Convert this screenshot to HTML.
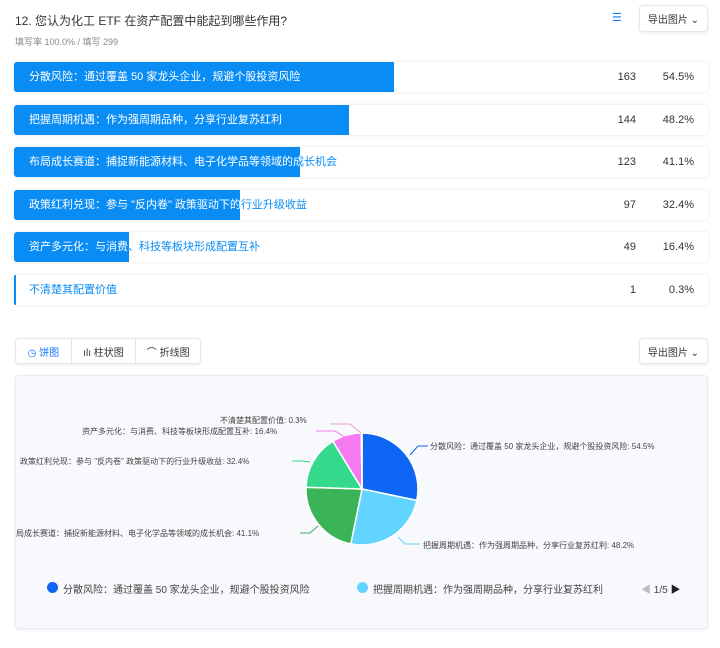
<!DOCTYPE html>
<html><head><meta charset="utf-8"><style>
*{margin:0;padding:0;box-sizing:border-box}
body{width:720px;height:648px;background:#fff;font-family:"Liberation Sans","Noto Sans CJK SC",sans-serif;position:relative;overflow:hidden;color:#333}
.abs{position:absolute}
.title{left:15px;top:12px;font-size:12px;color:#333}
.sub{left:15px;top:35px;font-size:9px;color:#888}
.btn{border:1px solid #e4e7ed;border-radius:4px;background:#fff;font-size:10px;color:#333;box-shadow:0 1px 3px rgba(0,0,0,.08);display:flex;align-items:center;justify-content:center}
.row{position:absolute;left:14px;width:694px;height:30px;border-radius:3px;background:#fff;box-shadow:0 0 3px rgba(0,0,0,.12);font-size:11px;line-height:30px}
.row .t{position:absolute;left:15px;top:0;color:#0a8cf5;white-space:nowrap}
.row .bar{position:absolute;left:0;top:0;height:30px;background:#0a8cf5;overflow:hidden;border-radius:3px 0 0 3px}
.row .bar .t{color:#fff}
.row .n{position:absolute;right:72px;top:0;color:#333}
.row .p{position:absolute;right:14px;top:0;color:#333}
.lbl{position:absolute;font-size:8px;color:#444;white-space:nowrap}
</style></head><body>
<div class="abs title">12. 您认为化工 ETF 在资产配置中能起到哪些作用?</div>
<div class="abs sub">填写率 100.0% / 填写 299</div>
<div class="abs" style="left:612px;top:11px;color:#1677ff;font-size:11px">☰</div>
<div class="abs btn" style="left:639px;top:5px;width:69px;height:27px">导出图片 ⌄</div>

<div class="row" style="top:62px"><div class="t">分散风险：通过覆盖 50 家龙头企业，规避个股投资风险</div><div class="bar" style="width:380px"><div class="t">分散风险：通过覆盖 50 家龙头企业，规避个股投资风险</div></div><div class="n">163</div><div class="p">54.5%</div></div>
<div class="row" style="top:104.5px"><div class="t">把握周期机遇：作为强周期品种，分享行业复苏红利</div><div class="bar" style="width:335px"><div class="t">把握周期机遇：作为强周期品种，分享行业复苏红利</div></div><div class="n">144</div><div class="p">48.2%</div></div>
<div class="row" style="top:147px"><div class="t">布局成长赛道：捕捉新能源材料、电子化学品等领域的成长机会</div><div class="bar" style="width:286px"><div class="t">布局成长赛道：捕捉新能源材料、电子化学品等领域的成长机会</div></div><div class="n">123</div><div class="p">41.1%</div></div>
<div class="row" style="top:189.5px"><div class="t">政策红利兑现：参与 "反内卷" 政策驱动下的行业升级收益</div><div class="bar" style="width:226px"><div class="t">政策红利兑现：参与 "反内卷" 政策驱动下的行业升级收益</div></div><div class="n">97</div><div class="p">32.4%</div></div>
<div class="row" style="top:232px"><div class="t">资产多元化：与消费、科技等板块形成配置互补</div><div class="bar" style="width:115px"><div class="t">资产多元化：与消费、科技等板块形成配置互补</div></div><div class="n">49</div><div class="p">16.4%</div></div>
<div class="row" style="top:274.5px"><div class="t">不清楚其配置价值</div><div class="bar" style="width:2px"></div><div class="n">1</div><div class="p">0.3%</div></div>

<div class="abs btn" style="left:15px;top:338px;width:186px;height:26px;justify-content:flex-start">
<div style="width:56px;height:100%;display:flex;align-items:center;justify-content:center;color:#1677ff;border-right:1px solid #e4e7ed">◷ 饼图</div>
<div style="width:65px;height:100%;display:flex;align-items:center;justify-content:center;border-right:1px solid #e4e7ed">ılı 柱状图</div>
<div style="width:64px;height:100%;display:flex;align-items:center;justify-content:center">⌒ 折线图</div>
</div>
<div class="abs btn" style="left:639px;top:338px;width:69px;height:26px">导出图片 ⌄</div>

<div class="abs" style="left:15px;top:375px;width:693px;height:254px;background:#f7f9fc;border:1px solid #e8ecf2;border-radius:4px;box-shadow:0 1px 3px rgba(0,0,0,.06)"></div>
<svg class="abs" style="left:0;top:0" width="720" height="648">
<g stroke="#fff" stroke-width="1.5">
<path d="M362 489 L362 433 A56 56 0 0 1 416.8 500.4Z" fill="#0f66f5"/>
<path d="M362 489 L416.8 500.4 A56 56 0 0 1 350.8 543.9Z" fill="#62d4ff"/>
<path d="M362 489 L350.8 543.9 A56 56 0 0 1 306 487.3Z" fill="#3bb357"/>
<path d="M362 489 L306 487.3 A56 56 0 0 1 332.9 441.2Z" fill="#34d98c"/>
<path d="M362 489 L332.9 441.2 A56 56 0 0 1 361.3 433Z" fill="#f57af2"/>
<path d="M362 489 L361.3 433 A56 56 0 0 1 362 433Z" fill="#f7a1b8"/>
</g>
<g fill="none" stroke-width="1">
<polyline points="410,455 418,446 428,446" stroke="#0f66f5"/>
<polyline points="398,537 405,544 420,544" stroke="#62d4ff"/>
<polyline points="318,526 310,533 300,533" stroke="#3bb357"/>
<polyline points="310,462 302,461 292,461" stroke="#34d98c"/>
<polyline points="345,437 335,431 316,431" stroke="#f57af2"/>
<polyline points="361,433 350,424 330,424" stroke="#f7a1b8"/>
</g>
</svg>
<div class="lbl" style="left:430px;top:441px">分散风险：通过覆盖 50 家龙头企业，规避个股投资风险: 54.5%</div>
<div class="lbl" style="left:423px;top:540px">把握周期机遇：作为强周期品种，分享行业复苏红利: 48.2%</div>
<div class="lbl" style="left:16px;top:528px">局成长赛道：捕捉新能源材料、电子化学品等领域的成长机会: 41.1%</div>
<div class="lbl" style="left:20px;top:456px">政策红利兑现：参与 "反内卷" 政策驱动下的行业升级收益: 32.4%</div>
<div class="lbl" style="left:82px;top:426px">资产多元化：与消费、科技等板块形成配置互补: 16.4%</div>
<div class="lbl" style="left:220px;top:415px">不清楚其配置价值: 0.3%</div>

<div class="abs" style="left:47px;top:582px;width:11px;height:11px;border-radius:50%;background:#0f66f5"></div>
<div class="lbl" style="left:63px;top:581px;font-size:10px">分散风险：通过覆盖 50 家龙头企业，规避个股投资风险</div>
<div class="abs" style="left:357px;top:582px;width:11px;height:11px;border-radius:50%;background:#62d4ff"></div>
<div class="lbl" style="left:373px;top:581px;font-size:10px">把握周期机遇：作为强周期品种，分享行业复苏红利</div>
<div class="lbl" style="left:641px;top:581px;font-size:10px"><span style="color:#bbb">◀</span> 1/5 <span style="color:#222">▶</span></div>
</body></html>
